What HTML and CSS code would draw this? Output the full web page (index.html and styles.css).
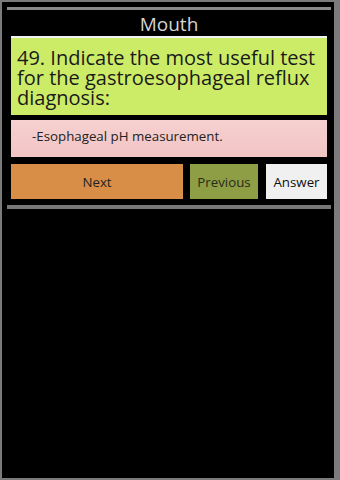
FILE: index.html
```html
<!DOCTYPE html>
<html>
<head>
<meta charset="utf-8">
<link rel="stylesheet" href="styles.css">
</head>
<body>
<div class="frame">
  <div class="bar"></div>
  <div class="content">
    <div class="title">Mouth</div>
    <div class="rule"></div>
    <div class="question">49. Indicate the most useful test for the gastroesophageal reflux diagnosis:</div>
    <div class="answer">-Esophageal pH measurement.</div>
    <div class="buttons">
      <div class="btn next">Next</div>
      <div class="btn prev">Previous</div>
      <div class="btn ans">Answer</div>
    </div>
  </div>
  <div class="bar bottom"></div>
</div>
</body>
</html>
```

FILE: styles.css
```css
html, body {
  margin: 0;
  padding: 0;
}
body {
  background: #7b7b7b;
  width: 340px;
  height: 480px;
  font-family: "Open Sans", "Noto Sans", "DejaVu Sans", sans-serif;
  overflow: hidden;
}
.frame {
  margin: 2px 6px 2px 2px;
  height: 476px;
  background: #000;
  padding: 5px 3px 0 5px;
  box-sizing: border-box;
}
.bar {
  height: 3px;
  background: #8a8a8a;
}
.bar.bottom {
  height: 4px;
  background: #777;
  margin-top: 6px;
}
.content {
  padding: 0 4px;
}
.title {
  height: 26px;
  box-sizing: border-box;
  padding-top: 2px;
  line-height: 25px;
  text-align: center;
  color: #d4d4d4;
  font-size: 19px;
}
.rule {
  height: 2px;
  background: #f2f2f2;
}
.question {
  background: #ccec68;
  color: #1a1a1a;
  font-size: 20px;
  line-height: 20px;
  padding: 10px 5px 9px 6px;
  height: 77px;
  box-sizing: border-box;
}
.answer {
  margin-top: 5px;
  height: 37px;
  box-sizing: border-box;
  background: linear-gradient(#f6d0d0, #f2c4c4);
  color: #222;
  font-size: 13.3px;
  line-height: 33px;
  padding-left: 21px;
}
.buttons {
  margin-top: 7px;
  display: flex;
  height: 35px;
}
.btn {
  font-size: 13.3px;
  display: flex;
  align-items: center;
  justify-content: center;
  color: #222;
}
.next {
  width: 172px;
  background: #d98e48;
}
.prev {
  width: 68px;
  margin-left: 7px;
  background: #8d9e44;
  color: #2a2a1a;
}
.ans {
  width: 61px;
  margin-left: 8px;
  background: #f0f0f0;
  color: #111;
}
```
